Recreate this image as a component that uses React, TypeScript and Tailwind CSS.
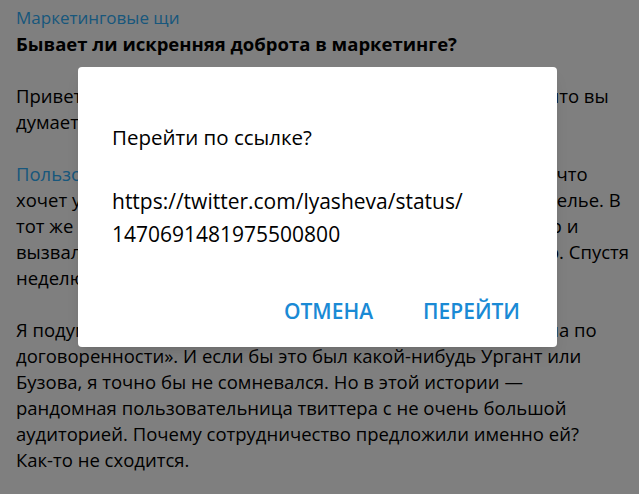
export default function App() {
  return (
    <div className="relative h-[494px] w-[639px] overflow-hidden bg-white font-['Open_Sans',sans-serif] text-black">
      <article className="whitespace-nowrap px-4 pt-[5px] text-[18.5px] leading-[26px]">
        <p className="text-[17px] text-[#30aef8]">Маркетинговые щи</p>
        <p className="font-bold">Бывает ли искренняя доброта в маркетинге?</p>
        <p className="mt-[26px]">
          Привет всем! Хотим поделиться одной историей и узнать, что вы
          <br />
          думаете о ней.
        </p>
        <p className="mt-[26px]">
          <span className="text-[#30aef8]">Пользовательница твиттера</span> @lyasheva однажды написала, что
          <br />
          хочет устроить для друзей скромное, но очень яркое новоселье. В
          <br />
          тот же вечер ей ответил официальный аккаунт Delivery Club и
          <br />
          вызвался оплатить доставку еды на всю шумную компанию. Спустя
          <br />
          неделю девушка выложила фото с праздника.
        </p>
        <p className="mt-[26px]">
          Я подумал, что всё это выглядело как классическая «реклама по
          <br />
          договоренности». И если бы это был какой-нибудь Ургант или
          <br />
          Бузова, я точно бы не сомневался. Но в этой истории —
          <br />
          рандомная пользовательница твиттера с не очень большой
          <br />
          аудиторией. Почему сотрудничество предложили именно ей?
          <br />
          Как-то не сходится.
        </p>
      </article>

      <div className="absolute inset-0 flex items-start bg-black/50 pl-[78px] pt-[67px]">
        <div className="flex h-[280px] w-[479px] flex-col rounded bg-white px-[34px] shadow-lg">
          <p className="mt-[54px] text-[20.5px] leading-[33px]">Перейти по ссылке?</p>
          <p className="mt-[31px] text-[21px] leading-[33px]">
            https://twitter.com/lyasheva/status/
            <br />
            1470691481975500800
          </p>
          <div className="mt-auto mb-[24px] flex justify-end gap-[50px] pr-[3px] text-[21px] leading-[24px] font-semibold text-[#1a8ad5]">
            <button type="button">ОТМЕНА</button>
            <button type="button">ПЕРЕЙТИ</button>
          </div>
        </div>
      </div>
    </div>
  )
}
